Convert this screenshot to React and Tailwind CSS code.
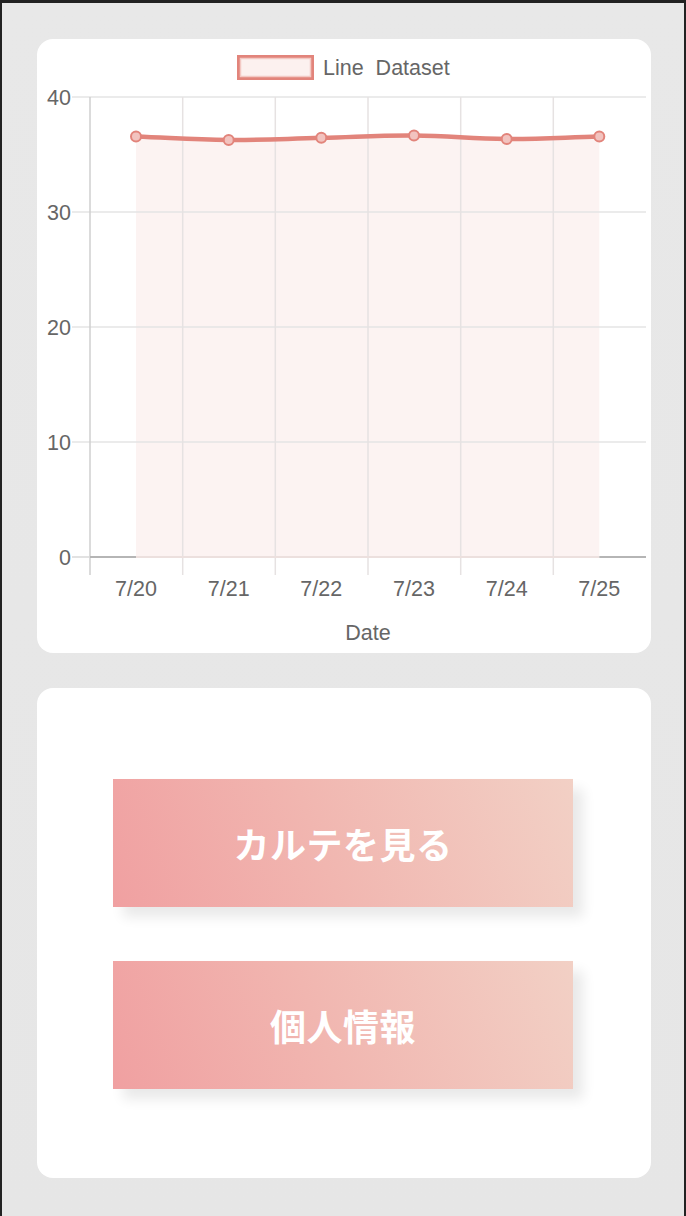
import React from "react";

const XS = [136, 228.7, 321.3, 414, 506.7, 599.3];
const YS = [136.5, 140, 137.8, 135.5, 139, 136.5];
const LABELS = ["7/20", "7/21", "7/22", "7/23", "7/24", "7/25"];
const LINE = "#e2847b";

function smoothPath(xs, ys, t = 0.4) {
  const pts = xs.map((x, i) => [x, ys[i]]);
  const cps = pts.map((p, i) => {
    const prev = pts[i - 1] || p;
    const next = pts[i + 1] || p;
    const d01 = Math.hypot(p[0] - prev[0], p[1] - prev[1]);
    const d12 = Math.hypot(next[0] - p[0], next[1] - p[1]);
    const s = d01 + d12 || 1;
    const fa = (t * d01) / s;
    const fb = (t * d12) / s;
    return {
      prev: [p[0] - fa * (next[0] - prev[0]), p[1] - fa * (next[1] - prev[1])],
      next: [p[0] + fb * (next[0] - prev[0]), p[1] + fb * (next[1] - prev[1])],
    };
  });
  let d = `M ${pts[0][0]} ${pts[0][1]}`;
  for (let i = 1; i < pts.length; i++) {
    const c1 = cps[i - 1].next;
    const c2 = cps[i].prev;
    d += ` C ${c1[0]} ${c1[1]} ${c2[0]} ${c2[1]} ${pts[i][0]} ${pts[i][1]}`;
  }
  return d;
}

function Chart() {
  const line = smoothPath(XS, YS);
  const fill = `${line} L ${XS[5]} 557 L ${XS[0]} 557 Z`;
  const vx = [182.7, 275.3, 368, 460.7, 553.3];
  const hy = [97, 212, 327, 442];
  return (
    <svg
      width="614"
      height="614"
      viewBox="37 39 614 614"
      className="block font-['Liberation_Sans',Arial,sans-serif]"
    >
      {/* legend */}
      <rect x="238.5" y="56.5" width="74" height="22" fill="#fcf1ef" stroke={LINE} strokeWidth="3" />
      <rect x="240.5" y="58.5" width="70" height="18" fill="none" stroke="#f3c9c4" strokeWidth="1.5" />
      <text x="323" y="75" fontSize="21.5" fill="#666">
        Line{"\u00a0"} Dataset
      </text>

      {/* fill */}
      <path d={fill} fill="#fcf3f2" />

      {/* horizontal grid */}
      {hy.map((y) => (
        <line key={y} x1="72" x2="646" y1={y} y2={y} stroke="#e4e4e4" strokeWidth="1.5" />
      ))}
      {/* vertical grid */}
      {vx.map((x) => (
        <line key={x} x1={x} x2={x} y1="97" y2="575" stroke="#e6e2e2" strokeWidth="1.5" />
      ))}
      {/* y axis */}
      <line x1="90" x2="90" y1="97" y2="575" stroke="#cfcfcf" strokeWidth="1.5" />
      {/* zero line */}
      <line x1="72" x2="90" y1="557" y2="557" stroke="#d8d8d8" strokeWidth="1.5" />
      <line x1="90" x2={XS[0]} y1="557" y2="557" stroke="#b5b5b5" strokeWidth="2" />
      <line x1={XS[0]} x2={XS[5]} y1="557" y2="557" stroke="#ece0de" strokeWidth="2" />
      <line x1={XS[5]} x2="646" y1="557" y2="557" stroke="#b5b5b5" strokeWidth="2" />

      {/* y labels */}
      {[40, 30, 20, 10, 0].map((v, i) => (
        <text key={v} x="71" y={97 + i * 115 + 7.5} fontSize="21.5" fill="#666" textAnchor="end">
          {v}
        </text>
      ))}
      {/* x labels */}
      {LABELS.map((l, i) => (
        <text key={l} x={XS[i]} y="596" fontSize="21.5" fill="#666" textAnchor="middle">
          {l}
        </text>
      ))}
      <text x="368" y="640" fontSize="21.5" fill="#666" textAnchor="middle">
        Date
      </text>

      {/* line */}
      <path d={line} fill="none" stroke={LINE} strokeWidth="4.5" strokeLinejoin="round" />
      {XS.map((x, i) => (
        <circle key={i} cx={x} cy={YS[i]} r="5" fill="#f2c3bf" stroke={LINE} strokeWidth="2" />
      ))}
    </svg>
  );
}

function GradButton({ children, className = "" }) {
  return (
    <button
      className={
        "ml-[76px] flex h-[128px] w-[460px] items-center justify-center bg-[linear-gradient(70deg,#f0a0a1,#f1b6b0_45%,#f2d0c5)] font-['Noto_Sans_CJK_JP','Noto_Sans',sans-serif] text-[36px] font-bold tracking-[0.5px] text-white shadow-[10px_10px_12px_rgba(0,0,0,0.09)] " +
        className
      }
    >
      {children}
    </button>
  );
}

export default function App() {
  return (
    <div className="h-[1216px] w-[686px] overflow-hidden border-x-2 border-t-[3px] border-[#222222] bg-[linear-gradient(to_bottom,#e8e8e8,#e6e6e6)]">
      <div className="pl-[35px] pt-[36px]">
        <div className="h-[614px] w-[614px] overflow-hidden rounded-[16px] bg-white">
          <Chart />
        </div>
        <div className="mt-[35px] flex h-[490px] w-[614px] flex-col rounded-[16px] bg-white pt-[91px]">
          <GradButton>カルテを見る</GradButton>
          <GradButton className="mt-[54px]">個人情報</GradButton>
        </div>
      </div>
    </div>
  );
}
